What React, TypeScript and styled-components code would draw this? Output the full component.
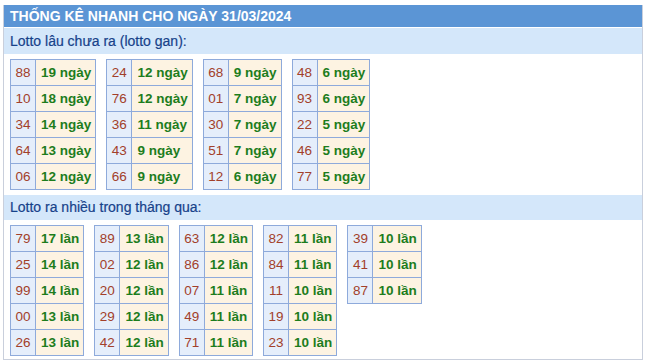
import styled, { createGlobalStyle } from "styled-components";

const GlobalStyle = createGlobalStyle`
  body {
    margin: 0;
    background: #ffffff;
    font-family: "Liberation Sans", Arial, sans-serif;
  }
`;

const Box = styled.div`
  margin: 5px 4px 0 3px;
  border: 1px solid #c9cfdc;
  border-top: none;
  padding-bottom: 3px;
`;

const Header = styled.div`
  background: #5b95d5;
  color: #ffffff;
  font-weight: bold;
  font-size: 14px;
  height: 22px;
  line-height: 22px;
  padding-left: 6px;
`;

const SubHeader = styled.div<{ $gap?: number; $h?: number }>`
  background: #d4e7fa;
  color: #17428a;
  font-size: 14px;
  height: ${(p) => p.$h ?? 26}px;
  line-height: ${(p) => p.$h ?? 26}px;
  padding-left: 6px;
  margin-top: ${(p) => p.$gap ?? 1}px;
  -webkit-text-stroke: 0.2px #17428a;
`;

const Tables = styled.div`
  display: flex;
  align-items: flex-start;
  gap: 10px;
  padding: 5px 6px 0;
`;

const Table = styled.table`
  border-collapse: collapse;
  font-size: 13.5px;
`;

const NumCell = styled.td`
  background: #e5eefb;
  color: #a2402a;
  border: 1px solid #8eaadb;
  height: 25px;
  padding: 0 4.5px;
  text-align: center;
`;

const ValCell = styled.td`
  background: #fdf3e2;
  color: #1d7d1d;
  font-weight: bold;
  border: 1px solid #8eaadb;
  height: 25px;
  padding: 0 4px 0 5px;
  white-space: nowrap;
`;

type Pair = [string, string];

const gan: Pair[][] = [
  [["88", "19"], ["10", "18"], ["34", "14"], ["64", "13"], ["06", "12"]],
  [["24", "12"], ["76", "12"], ["36", "11"], ["43", "9"], ["66", "9"]],
  [["68", "9"], ["01", "7"], ["30", "7"], ["51", "7"], ["12", "6"]],
  [["48", "6"], ["93", "6"], ["22", "5"], ["46", "5"], ["77", "5"]],
];

const nhieu: Pair[][] = [
  [["79", "17"], ["25", "14"], ["99", "14"], ["00", "13"], ["26", "13"]],
  [["89", "13"], ["02", "12"], ["20", "12"], ["29", "12"], ["42", "12"]],
  [["63", "12"], ["86", "12"], ["07", "11"], ["49", "11"], ["71", "11"]],
  [["82", "11"], ["84", "11"], ["11", "10"], ["19", "10"], ["23", "10"]],
  [["39", "10"], ["41", "10"], ["87", "10"]],
];

const LottoTable = ({ rows, unit }: { rows: Pair[]; unit: string }) => (
  <Table>
    <tbody>
      {rows.map(([n, v]) => (
        <tr key={n}>
          <NumCell>{n}</NumCell>
          <ValCell>
            {v} {unit}
          </ValCell>
        </tr>
      ))}
    </tbody>
  </Table>
);

export default function App() {
  return (
    <>
      <GlobalStyle />
      <Box>
        <Header>THỐNG KÊ NHANH CHO NGÀY 31/03/2024</Header>
        <SubHeader>Lotto lâu chưa ra (lotto gan):</SubHeader>
        <Tables>
          {gan.map((rows, i) => (
            <LottoTable key={i} rows={rows} unit="ngày" />
          ))}
        </Tables>
        <SubHeader $gap={5} $h={25}>Lotto ra nhiều trong tháng qua:</SubHeader>
        <Tables>
          {nhieu.map((rows, i) => (
            <LottoTable key={i} rows={rows} unit="lần" />
          ))}
        </Tables>
      </Box>
    </>
  );
}
